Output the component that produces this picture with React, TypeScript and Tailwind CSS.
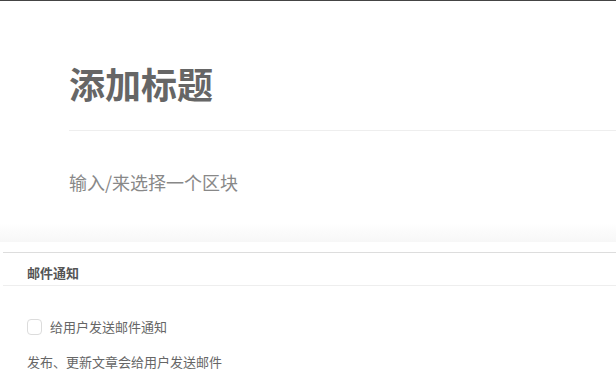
import React from "react";

export default function App() {
  const font = { fontFamily: '"Noto Sans CJK SC", "Noto Sans", sans-serif' };
  return (
    <div className="w-[616px] h-[382px] overflow-hidden bg-white border-t border-[#444]" style={font}>
      <div className="h-[241px] bg-gradient-to-b from-white from-[92%] to-[#f7f7f7]">
        <div className="pl-[69px] pt-[55px]">
          <div className="text-[36px] leading-[54px] font-bold text-[#666]">添加标题</div>
          <div className="mt-[20px] h-px bg-[#eeeeee]" />
          <div className="mt-[36px] text-[18px] leading-[30px] text-[#888]">输入/来选择一个区块</div>
        </div>
      </div>
      <div className="ml-[3px] mt-[10px] border-t border-[#dddddd]">
        <div className="pl-[24px] pt-[8px] h-[33px] flex items-center border-b border-[#eeeeee] text-[13px] font-bold text-[#555]">
          邮件通知
        </div>
        <div className="pl-[24px] pt-[32px]">
          <label className="flex items-center gap-[8px] text-[13px] text-[#666] h-[18px]">
            <span className="w-[15px] h-[16px] rounded-[4px] border border-[#dcdcdc] bg-white" />
            给用户发送邮件通知
          </label>
          <div className="mt-[16px] text-[13px] leading-[20px] text-[#666]">发布、更新文章会给用户发送邮件</div>
        </div>
      </div>
    </div>
  );
}
